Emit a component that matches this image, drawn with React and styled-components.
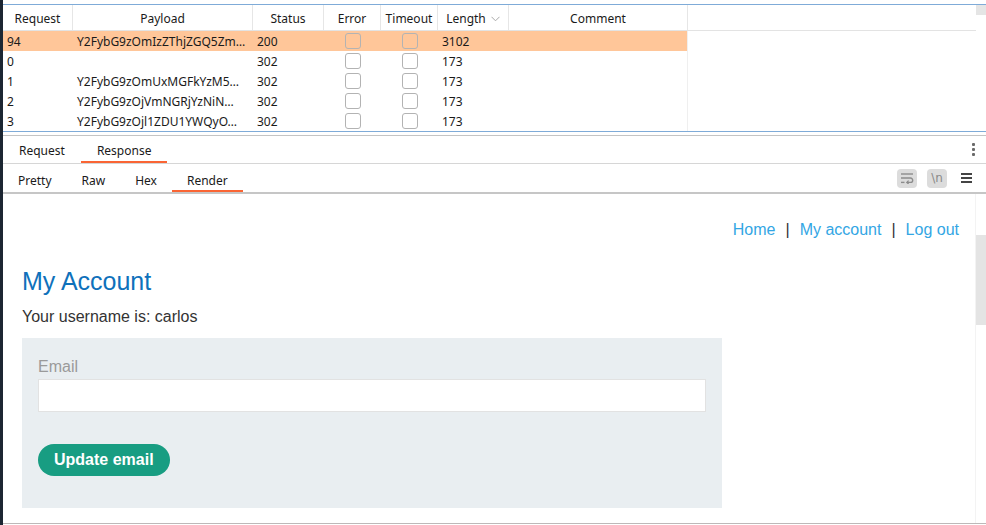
import React from "react";
import styled, { createGlobalStyle } from "styled-components";

const GlobalStyle = createGlobalStyle`
  html, body { margin: 0; padding: 0; background: #ffffff; }
  * { box-sizing: border-box; }
`;

const columns = [
  { key: "request", title: "Request", width: 70 },
  { key: "payload", title: "Payload", width: 180 },
  { key: "status", title: "Status", width: 71 },
  { key: "error", title: "Error", width: 57 },
  { key: "timeout", title: "Timeout", width: 57 },
  { key: "length", title: "Length", width: 71, sorted: true },
  { key: "comment", title: "Comment", width: 179 },
];

const rows = [
  { request: "94", payload: "Y2FybG9zOmIzZThjZGQ5Zm…", status: "200", length: "3102", selected: true },
  { request: "0", payload: "", status: "302", length: "173" },
  { request: "1", payload: "Y2FybG9zOmUxMGFkYzM5…", status: "302", length: "173" },
  { request: "2", payload: "Y2FybG9zOjVmNGRjYzNiN…", status: "302", length: "173" },
  { request: "3", payload: "Y2FybG9zOjl1ZDU1YWQyO…", status: "302", length: "173" },
];

const gridCols = columns.map((c) => `${c.width}px`).join(" ") + " 1fr";

export default function App() {
  return (
    <Frame>
      <GlobalStyle />
      <LeftEdge />
      <Main>
        <ResultsPane>
          <Table>
            <HeaderRow>
              {columns.map((c) => (
                <HeaderCell key={c.key}>
                  {c.title}
                  {c.sorted && (
                    <SortIcon width="9" height="6" viewBox="0 0 9 6">
                      <path d="M0.5 0.8 L4.5 4.8 L8.5 0.8" fill="none" stroke="#a9a9a9" strokeWidth="1" />
                    </SortIcon>
                  )}
                </HeaderCell>
              ))}
              <HeaderFiller />
            </HeaderRow>
            {rows.map((r) => (
              <Row key={r.request} $selected={r.selected}>
                <Cell>{r.request}</Cell>
                <Cell>{r.payload}</Cell>
                <Cell>{r.status}</Cell>
                <CheckCell>
                  <Check />
                </CheckCell>
                <CheckCell>
                  <Check />
                </CheckCell>
                <Cell>{r.length}</Cell>
                <Cell $last />
                <Filler />
              </Row>
            ))}
          </Table>
          <TableScroll>
            <ScrollCorner />
          </TableScroll>
        </ResultsPane>

        <TabBar $top>
          <Tab $pad={16} $shift={3}>Request</Tab>
          <Tab $pad={16} $shift={3} $active>Response</Tab>
          <BarTools>
            <Kebab>
              <span />
              <span />
              <span />
            </Kebab>
          </BarTools>
        </TabBar>

        <TabBar>
          <Tab $pad={15} $shift={6}>Pretty</Tab>
          <Tab $pad={15} $shift={6}>Raw</Tab>
          <Tab $pad={15} $shift={6}>Hex</Tab>
          <Tab $pad={15} $shift={6} $active>Render</Tab>
          <BarTools>
            <ToolButton>
              <svg width="14" height="12" viewBox="0 0 14 12">
                <path d="M1 2 H13" stroke="#8c8c8c" strokeWidth="1.4" fill="none" />
                <path d="M1 6 H10.5 a2.2 2.2 0 0 1 0 4.4 H7" stroke="#8c8c8c" strokeWidth="1.4" fill="none" />
                <path d="M8.6 8.6 L6.8 10.4 L8.6 12" stroke="#8c8c8c" strokeWidth="1.3" fill="none" />
                <path d="M1 10.4 H4.5" stroke="#8c8c8c" strokeWidth="1.4" fill="none" />
              </svg>
            </ToolButton>
            <ToolButton>\n</ToolButton>
            <Hamburger>
              <span />
              <span />
              <span />
            </Hamburger>
          </BarTools>
        </TabBar>

        <RenderPane>
          <Page>
            <Nav>
              <NavLink>Home</NavLink>
              <NavSep>|</NavSep>
              <NavLink>My account</NavLink>
              <NavSep>|</NavSep>
              <NavLink>Log out</NavLink>
            </Nav>
            <Heading>My Account</Heading>
            <Username>Your username is: carlos</Username>
            <EmailForm>
              <Label>Email</Label>
              <Input />
              <SubmitButton>Update email</SubmitButton>
            </EmailForm>
          </Page>
          <PageScroll>
            <Thumb />
          </PageScroll>
        </RenderPane>
      </Main>
    </Frame>
  );
}

const Frame = styled.div`
  display: flex;
  width: 986px;
  height: 525px;
  background: #ffffff;
  overflow: hidden;
  font-family: "Noto Sans", "Open Sans", sans-serif;
  font-size: 12px;
  color: #1a1a1a;
`;

const LeftEdge = styled.div`
  width: 3px;
  flex-shrink: 0;
  background: #1c2632;
`;

const Main = styled.div`
  flex: 1;
  min-width: 0;
  display: flex;
  flex-direction: column;
`;

const ResultsPane = styled.div`
  margin-top: 4px;
  height: 128px;
  border-top: 1px solid #7fabd8;
  border-bottom: 1px solid #7fabd8;
  display: flex;
`;

const Table = styled.div`
  flex: 1;
  display: flex;
  flex-direction: column;
`;

const HeaderRow = styled.div`
  display: grid;
  grid-template-columns: ${gridCols};
  height: 26px;
  border-bottom: 1px solid #e3e3e3;
`;

const HeaderCell = styled.div`
  display: flex;
  align-items: center;
  justify-content: center;
  gap: 5px;
  padding-top: 2px;
  border-right: 1px solid #e6e6e6;
  white-space: nowrap;
`;

const HeaderFiller = styled.div``;

const SortIcon = styled.svg`
  margin-top: 1px;
`;

const Row = styled.div`
  display: grid;
  grid-template-columns: ${gridCols};
  height: 20px;
  background: ${(p) => (p.$selected ? "#ffc699" : "#ffffff")};
`;

const Cell = styled.div`
  display: flex;
  align-items: center;
  padding-left: 4px;
  white-space: nowrap;
  overflow: hidden;
  border-right: ${(p) => (p.$last ? "1px solid #efefef" : "none")};
`;

const Filler = styled.div`
  background: #ffffff;
`;

const CheckCell = styled.div`
  display: flex;
  align-items: center;
  justify-content: center;
`;

const Check = styled.div`
  width: 16px;
  height: 16px;
  border: 1px solid #b3b3b3;
  border-radius: 3px;
  background: transparent;
`;

const TableScroll = styled.div`
  width: 10px;
  flex-shrink: 0;
`;

const ScrollCorner = styled.div`
  height: 10px;
  background: #e5e5e5;
`;

const TabBar = styled.div`
  display: flex;
  align-items: stretch;
  height: ${(p) => (p.$top ? "29px" : "30px")};
  margin-top: ${(p) => (p.$top ? "3px" : "0")};
  border-top: ${(p) => (p.$top ? "1px solid #c4c4c4" : "none")};
  border-bottom: ${(p) => (p.$top ? "1px solid #d6d6d6" : "2px solid #c6c6c6")};
  padding-right: ${(p) => (p.$top ? "11px" : "14px")};
  background: #ffffff;
`;

const Tab = styled.div`
  display: flex;
  align-items: center;
  padding: ${(p) => `${p.$shift}px ${p.$pad}px 0`};
  font-size: 12px;
  color: #1a1a1a;
  border-bottom: 2px solid ${(p) => (p.$active ? "#fa6534" : "transparent")};
`;

const BarTools = styled.div`
  margin-left: auto;
  display: flex;
  align-items: center;
  gap: 10px;
`;

const Kebab = styled.div`
  display: flex;
  flex-direction: column;
  gap: 2px;
  span {
    display: block;
    width: 3px;
    height: 3px;
    background: #6a6a6a;
    border-radius: 1px;
  }
`;

const ToolButton = styled.div`
  width: 20px;
  height: 19px;
  border-radius: 4px;
  background: #dcdcdc;
  display: flex;
  align-items: center;
  justify-content: center;
  color: #8a8a8a;
  font-size: 12px;
  font-family: "DejaVu Sans", sans-serif;
`;

const Hamburger = styled.div`
  display: flex;
  flex-direction: column;
  gap: 2px;
  margin-left: 4px;
  span {
    display: block;
    width: 11px;
    height: 2px;
    background: #444444;
  }
`;

const RenderPane = styled.div`
  flex: 1;
  display: flex;
  border-bottom: 1px solid #bdb8b8;
  margin-bottom: 1px;
  min-height: 0;
`;

const Page = styled.div`
  flex: 1;
  padding: 27px 16px 0 19px;
  font-family: "Liberation Sans", Arial, sans-serif;
  font-size: 16px;
  color: #333333;
`;

const Nav = styled.div`
  display: flex;
  justify-content: flex-end;
  line-height: 18px;
  gap: 10px;
`;

const NavLink = styled.span`
  color: #33a6e4;
`;

const NavSep = styled.span`
  color: #333333;
`;

const Heading = styled.h1`
  margin: 28px 0 0;
  font-size: 25px;
  line-height: 28px;
  font-weight: normal;
  color: #0f71bb;
`;

const Username = styled.p`
  margin: 13px 0 0;
  line-height: 18px;
`;

const EmailForm = styled.div`
  margin-top: 12px;
  width: 700px;
  background: #e9eef1;
  padding: 20px 16px 32px;
  display: flex;
  flex-direction: column;
  align-items: flex-start;
`;

const Label = styled.label`
  color: #9a9a9a;
  line-height: 18px;
`;

const Input = styled.div`
  margin-top: 3px;
  width: 100%;
  height: 33px;
  background: #ffffff;
  border: 1px solid #e2e2e2;
`;

const SubmitButton = styled.button`
  margin-top: 32px;
  height: 32px;
  padding: 0 16px;
  border: none;
  border-radius: 16px;
  background: #189d82;
  color: #ffffff;
  font-family: "Liberation Sans", Arial, sans-serif;
  font-weight: bold;
  font-size: 16px;
`;

const PageScroll = styled.div`
  width: 11px;
  flex-shrink: 0;
  border-left: 1px solid #f3f3f3;
  padding-top: 41px;
`;

const Thumb = styled.div`
  height: 90px;
  background: #e4e4e4;
`;
